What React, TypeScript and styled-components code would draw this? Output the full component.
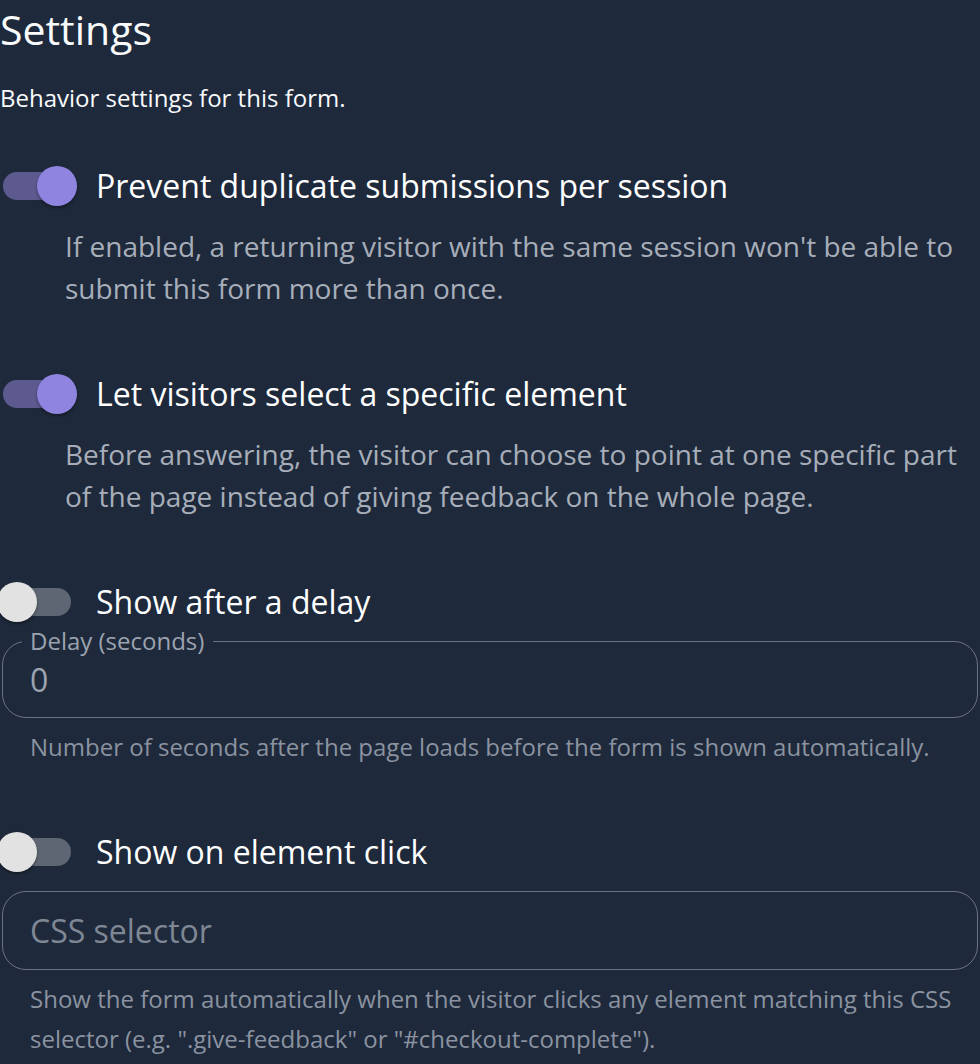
import React, { useState } from "react";
import styled, { createGlobalStyle } from "styled-components";

const GlobalStyle = createGlobalStyle`
  html, body {
    margin: 0;
    padding: 0;
    background: #1e293b;
  }
  body {
    font-family: "Open Sans", "Noto Sans", sans-serif;
    color: #f8fafc;
  }
  * {
    box-sizing: border-box;
  }
`;

const Page = styled.div`
  display: flex;
  flex-direction: column;
  padding: 5px 2px 0 0;
  min-height: 1064px;
`;

const Heading = styled.h1`
  margin: 0;
  font-size: 41px;
  font-weight: 400;
  line-height: 48px;
`;

const Subtitle = styled.p`
  margin: 29px 0 0;
  font-size: 24px;
  line-height: 32px;
`;

const Block = styled.section<{ $first?: boolean }>`
  display: flex;
  flex-direction: column;
  margin-top: ${(p) => (p.$first ? "48px" : "61px")};
`;

const Row = styled.label`
  display: flex;
  align-items: center;
  gap: 25px;
  height: 48px;
  cursor: pointer;
`;

const Track = styled.span<{ $on: boolean }>`
  position: relative;
  flex: none;
  width: 68px;
  height: 28px;
  margin-left: 3px;
  border-radius: 14px;
  background: ${(p) => (p.$on ? "#5c5a8f" : "#5d6672")};
`;

const Thumb = styled.span<{ $on: boolean }>`
  position: absolute;
  top: -6px;
  left: ${(p) => (p.$on ? "34px" : "-6px")};
  width: 40px;
  height: 40px;
  border-radius: 50%;
  background: ${(p) => (p.$on ? "#8f85e0" : "#e2e2e2")};
  box-shadow: 0 2px 3px rgba(0, 0, 0, 0.35);
`;

const Title = styled.span`
  font-size: 32px;
  line-height: 40px;
  color: #ffffff;
`;

const Description = styled.p`
  margin: 15px 0 0 65px;
  font-size: 28px;
  line-height: 42px;
  color: #a7aeb9;
`;

const Field = styled.fieldset<{ $legend?: boolean }>`
  margin: ${(p) => (p.$legend ? "3px" : "15px")} 0 0 2px;
  padding: 0 27px;
  min-width: 0;
  border: 1.5px solid #6b7482;
  border-radius: 24px;
`;

const Legend = styled.legend`
  margin-left: -8px;
  padding: 0 9px 0 8px;
  font-size: 24px;
  line-height: 24px;
  color: #9ba3af;
`;

const Input = styled.input<{ $tall?: boolean }>`
  display: block;
  width: 100%;
  height: ${(p) => (p.$tall ? "77px" : "64px")};
  padding: 0 0 ${(p) => (p.$tall ? "0" : "11px")};
  border: none;
  outline: none;
  background: transparent;
  font-family: inherit;
  font-size: 32px;
  color: #9ba3af;
  &::placeholder {
    color: #7f8794;
  }
`;

const Helper = styled.p`
  margin: 9px 0 0 30px;
  font-size: 24px;
  line-height: 40px;
  color: #8b93a0;
`;

function Toggle({ on, onToggle }: { on: boolean; onToggle: () => void }) {
  return (
    <Track $on={on} onClick={onToggle}>
      <Thumb $on={on} />
    </Track>
  );
}

export default function App() {
  const [dedupe, setDedupe] = useState(true);
  const [pick, setPick] = useState(true);
  const [delayOn, setDelayOn] = useState(false);
  const [clickOn, setClickOn] = useState(false);
  const [delay, setDelay] = useState("0");
  const [selector, setSelector] = useState("");

  return (
    <>
      <GlobalStyle />
      <Page>
        <Heading>Settings</Heading>
        <Subtitle>Behavior settings for this form.</Subtitle>

        <Block $first>
          <Row>
            <Toggle on={dedupe} onToggle={() => setDedupe(!dedupe)} />
            <Title>Prevent duplicate submissions per session</Title>
          </Row>
          <Description>
            If enabled, a returning visitor with the same session won't be able to
            submit this form more than once.
          </Description>
        </Block>

        <Block>
          <Row>
            <Toggle on={pick} onToggle={() => setPick(!pick)} />
            <Title>Let visitors select a specific element</Title>
          </Row>
          <Description>
            Before answering, the visitor can choose to point at one specific part
            of the page instead of giving feedback on the whole page.
          </Description>
        </Block>

        <Block>
          <Row>
            <Toggle on={delayOn} onToggle={() => setDelayOn(!delayOn)} />
            <Title>Show after a delay</Title>
          </Row>
          <Field $legend>
            <Legend>Delay (seconds)</Legend>
            <Input value={delay} onChange={(e) => setDelay(e.target.value)} />
          </Field>
          <Helper>
            Number of seconds after the page loads before the form is shown automatically.
          </Helper>
        </Block>

        <Block>
          <Row>
            <Toggle on={clickOn} onToggle={() => setClickOn(!clickOn)} />
            <Title>Show on element click</Title>
          </Row>
          <Field>
            <Input
              $tall
              placeholder="CSS selector"
              value={selector}
              onChange={(e) => setSelector(e.target.value)}
            />
          </Field>
          <Helper>
            Show the form automatically when the visitor clicks any element matching this CSS
            selector (e.g. ".give-feedback" or "#checkout-complete").
          </Helper>
        </Block>
      </Page>
    </>
  );
}
